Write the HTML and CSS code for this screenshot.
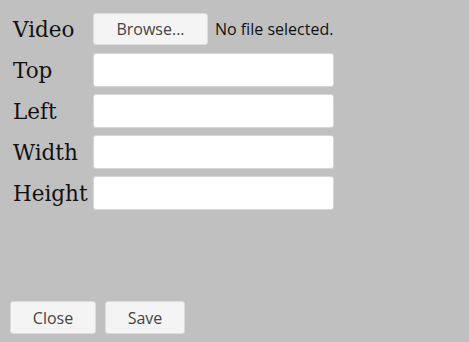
FILE: index.html
```html
<!DOCTYPE html>
<html lang="en">
<head>
    <meta charset="UTF-8">
    <meta name="viewport" content="width=device-width, initial-scale=1.0">
    <title>Video</title>
    <link rel="stylesheet" href="styles.css">
</head>
<body>
    <div class="dialog">
        <!-- Fields -->
        <div class="fields">
            <label class="label">Video</label>
            <div class="file-row">
                <span class="btn browse">Browse...</span>
                <span class="file-name">No file selected.</span>
            </div>
            <label class="label">Top</label>
            <input class="field" type="text">
            <label class="label">Left</label>
            <input class="field" type="text">
            <label class="label">Width</label>
            <input class="field" type="text">
            <label class="label">Height</label>
            <input class="field" type="text">
        </div>

        <!-- Actions -->
        <div class="actions">
            <span class="btn close">Close</span>
            <span class="btn save">Save</span>
        </div>
    </div>
</body>
</html>
```

FILE: styles.css
```css
html, body {
    height: 100%;
}
body {
    margin: 0;
    background-color: #c0c0c0;
    font-family: 'Open Sans', sans-serif;
}
.dialog {
    height: 100%;
    box-sizing: border-box;
    padding: 12px 10px 8px 13px;
    display: flex;
    flex-direction: column;
    justify-content: space-between;
}
.fields {
    display: grid;
    grid-template-columns: 80px 241px;
    grid-auto-rows: 34px;
    row-gap: 7px;
    align-items: center;
}
.label {
    font-family: 'DejaVu Serif', serif;
    font-size: 21.5px;
    color: #111;
}
.field {
    box-sizing: border-box;
    width: 241px;
    height: 34px;
    margin: 0;
    background-color: #fff;
    border: 1px solid #d6d6d6;
    border-radius: 3px;
}
.file-row {
    display: flex;
    align-items: center;
    gap: 7px;
}
.btn {
    box-sizing: border-box;
    display: inline-flex;
    align-items: center;
    justify-content: center;
    height: 33px;
    background-color: #f4f4f4;
    border: 1px solid #dcdcdc;
    border-radius: 3px;
    color: #444;
    font-size: 16px;
}
.browse {
    width: 115px;
    height: 32px;
}
.file-name {
    font-size: 16px;
    color: #111;
}
.actions {
    display: flex;
    gap: 9px;
    margin-left: -3px;
}
.close {
    width: 86px;
}
.save {
    width: 80px;
}
```
